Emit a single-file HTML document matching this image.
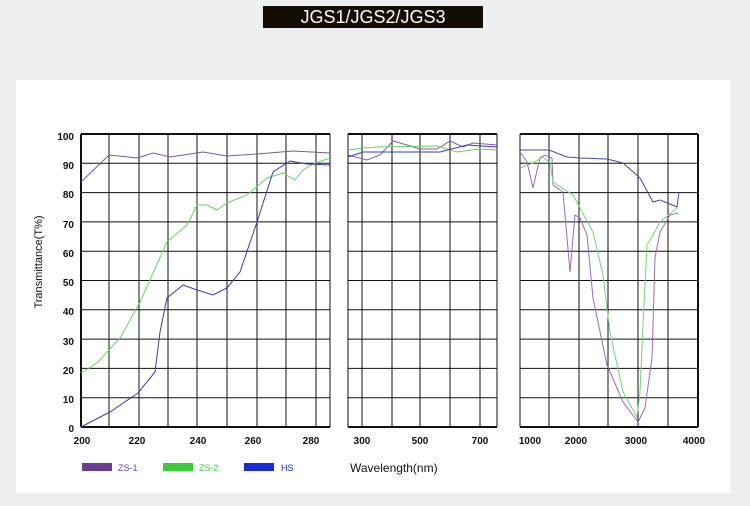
<!DOCTYPE html>
<html><head><style>
body{margin:0;background:#eeeff1;width:750px;height:506px;overflow:hidden;font-family:"Liberation Sans",Arial,sans-serif;}
.t{position:absolute;left:263px;top:6px;width:220px;height:22px;background:#140d05;color:#fff;font-size:18px;line-height:22px;text-align:center;letter-spacing:0px}
.p{position:absolute;left:16px;top:80px;width:714px;height:413px;background:#fff}
</style></head><body>
<div class="t">JGS1/JGS2/JGS3</div>
<div class="p"></div>
<svg width="750" height="506" style="position:absolute;left:0;top:0" font-family="Liberation Sans,Arial,sans-serif">
<g stroke="#111" stroke-width="1" fill="none">
<!-- horizontals -->
<g id="h">
<line x1="81" x2="330" y1="134" y2="134" stroke-width="2"/>
<line x1="81" x2="330" y1="163.3" y2="163.3"/><line x1="81" x2="330" y1="192.6" y2="192.6"/><line x1="81" x2="330" y1="221.9" y2="221.9"/><line x1="81" x2="330" y1="251.2" y2="251.2"/><line x1="81" x2="330" y1="280.5" y2="280.5"/><line x1="81" x2="330" y1="309.8" y2="309.8"/><line x1="81" x2="330" y1="339.1" y2="339.1"/><line x1="81" x2="330" y1="368.4" y2="368.4"/><line x1="81" x2="330" y1="397.7" y2="397.7"/>
<line x1="81" x2="330" y1="427" y2="427" stroke-width="2"/>
</g>
<use href="#h" transform="translate(348,0) scale(0.598,1) translate(-81,0)"/>
<use href="#h" transform="translate(520,0) scale(0.715,1) translate(-81,0)"/>
<!-- verticals -->
<path d="M81 134V427M109 134V427M139 134V427M168 134V427M197 134V427M227 134V427M257 134V427M286 134V427M316 134V427M330 134V427" />
<path d="M348 134V427M362 134V427M392 134V427M420 134V427M450 134V427M480 134V427M497 134V427"/>
<path d="M520 134V427M549 134V427M579 134V427M608 134V427M638 134V427M668 134V427M698 134V427"/>
<path d="M81 134V427M698 134V427" stroke-width="2"/>
</g>
<g fill="none" stroke-width="1">
<polyline stroke="#7a5aa0" points="81,182 109,155 137,158 153,153 170,157 203,152 227,156 257,154 293,151 330,153"/>
<polyline stroke="#6ccf6c" points="81,373 97,363 120,338 140,302 167,242 187,225 197,205 207,205 217,210 227,203 247,195 267,178 283,173 295,180 303,170 313,164 330,158"/>
<polyline stroke="#3c3ca8" points="81,427 110,412 138,393 155,372 160,332 167,298 183,285 197,290 213,295 227,288 240,272 257,222 273,172 290,161 307,164 330,165"/>
<polyline stroke="#8a5aa8" points="348,155 367,160 380,155 393,141 407,145 420,149 437,149 450,141 463,147 473,143 497,145"/>
<polyline stroke="#6ccf6c" points="348,150 363,148 377,147 437,146 457,152 480,149 497,150"/>
<polyline stroke="#3c3cb8" points="348,157 363,152 440,152 467,145 497,147"/>
<polyline stroke="#4a4aa8" points="520,150 549,150 567,157 580,158 607,159 623,163 640,178 653,202 660,200 665,202 677,207 679,192"/>
<polyline stroke="#9a6ab8" points="520,152 527,162 533,188 540,158 545,155 552,158 553,185 563,192 570,272 575,215 580,218 587,235 593,298 607,365 623,402 638,422 645,408 652,358 655,258 660,232 670,215 678,213"/>
<polyline stroke="#7ad07a" points="520,168 533,163 543,157 550,163 553,182 573,195 593,232 603,275 610,332 623,392 637,417 640,392 643,325 647,245 653,235 660,222 677,208"/>
</g>
<g font-size="10" fill="#111" text-anchor="end" font-weight="bold">
<text x="74" y="140">100</text><text x="74" y="169">90</text><text x="74" y="198">80</text><text x="74" y="228">70</text><text x="74" y="257">60</text><text x="74" y="286">50</text><text x="74" y="315">40</text><text x="74" y="345">30</text><text x="74" y="374">20</text><text x="74" y="403">10</text><text x="74" y="432">0</text>
</g>
<g font-size="10" fill="#111" text-anchor="middle" font-weight="bold">
<text x="82" y="444">200</text><text x="137" y="444">220</text><text x="198" y="444">240</text><text x="253" y="444">260</text><text x="311" y="444">280</text>
<text x="362" y="444">300</text><text x="420" y="444">500</text><text x="480" y="444">700</text>
<text x="530" y="444">1000</text><text x="576" y="444">2000</text><text x="636" y="444">3000</text><text x="694" y="444">4000</text>
</g>
<text x="0" y="0" font-size="11" fill="#111" text-anchor="middle" transform="translate(42,262) rotate(-90)">Transmittance(T%)</text>
<rect x="82" y="463" width="30" height="8" fill="#6a3d9a"/><text x="118" y="471" font-size="9" fill="#6a3d9a">ZS-1</text>
<rect x="163" y="463" width="30" height="8" fill="#3ccf3c"/><text x="199" y="471" font-size="9" fill="#3ccf3c">ZS-2</text>
<rect x="244" y="463" width="30" height="8" fill="#1a2ad8"/><text x="281" y="471" font-size="9" fill="#1a2ad8">HS</text>
<text x="350" y="472" font-size="12" fill="#111">Wavelength(nm)</text>
</svg>
</body></html>
